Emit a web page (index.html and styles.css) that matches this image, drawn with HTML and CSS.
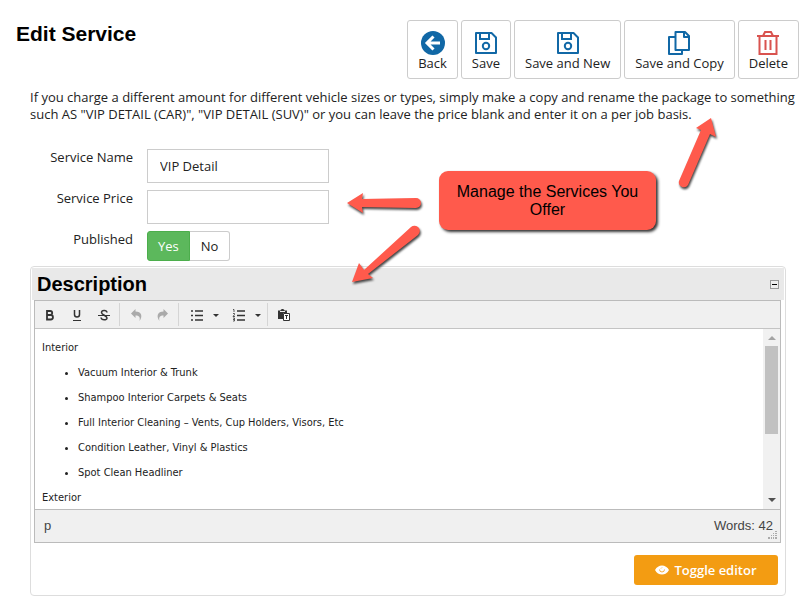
FILE: index.html
```
<!DOCTYPE html>
<html lang="en">
<head>
    <meta charset="UTF-8">
    <meta name="viewport" content="width=device-width, initial-scale=1.0">
    <title>Edit Service</title>
    <link rel="stylesheet" href="styles.css">
</head>
<body>
    <div class="page">
        <header class="page-header">
            <h1>Edit Service</h1>
            <div class="actions">
                <button type="button" class="action-btn">
                    <svg width="26" height="26" viewBox="0 0 26 26"><circle cx="13" cy="13" r="12" fill="#1168a6"/><path d="M20 13H8M13.500 6.500L7 13l6.500 6.500" fill="none" stroke="#fff" stroke-width="3"/></svg>
                    Back
                </button>
                <button type="button" class="action-btn">
                    <svg width="26" height="26" viewBox="0 0 26 26" fill="none" stroke="#1168a6" stroke-width="2"><path d="M3 3h15.500L23 7.500V23H3z" stroke-linejoin="round"/><path d="M7 3v6h9V3"/><circle cx="13" cy="16" r="3.200"/></svg>
                    Save
                </button>
                <button type="button" class="action-btn">
                    <svg width="26" height="26" viewBox="0 0 26 26" fill="none" stroke="#1168a6" stroke-width="2"><path d="M3 3h15.500L23 7.500V23H3z" stroke-linejoin="round"/><path d="M7 3v6h9V3"/><circle cx="13" cy="16" r="3.200"/></svg>
                    Save and New
                </button>
                <button type="button" class="action-btn">
                    <svg width="26" height="26" viewBox="0 0 26 26" fill="none" stroke="#1168a6" stroke-width="2" stroke-linejoin="round"><path d="M9 7H3v17h13v-4"/><path d="M9.500 2H19l4 4v14H9.500z"/><path d="M18 2v5h5"/></svg>
                    Save and Copy
                </button>
                <button type="button" class="action-btn">
                    <svg width="26" height="26" viewBox="0 0 26 26" fill="none" stroke="#d9534f" stroke-width="2"><path d="M2 6h22M8 6l2-4h6l2 4M4.500 6v18h17V6M10.500 10v10M15.500 10v10"/></svg>
                    Delete
                </button>
            </div>
        </header>

        <main class="content">
            <p class="intro">If you charge a different amount for different vehicle sizes or types, simply make a copy and rename the package to something such AS "VIP DETAIL (CAR)", "VIP DETAIL (SUV)" or you can leave the price blank and enter it on a per job basis.</p>

            <form class="service-form" autocomplete="off">
                <div class="form-row">
                    <label class="form-label" for="name">Service Name</label>
                    <input class="form-input" type="text" id="name" value="VIP Detail">
                </div>
                <div class="form-row">
                    <label class="form-label" for="price">Service Price</label>
                    <input class="form-input" type="text" id="price">
                </div>
                <div class="form-row">
                    <span class="form-label" id="published-label">Published</span>
                    <div class="switch" role="radiogroup" aria-labelledby="published-label">
                        <input type="radio" name="published" id="published-yes" checked>
                        <label for="published-yes">Yes</label>
                        <input type="radio" name="published" id="published-no">
                        <label for="published-no">No</label>
                    </div>
                </div>
            </form>

            <section class="panel">
                <div class="panel-header">
                    <h2>Description</h2>
                    <button type="button" class="collapse-btn" aria-label="Collapse"></button>
                </div>
                <div class="editor">
                    <div class="toolbar">
                        <div class="tool-group">
                            <button type="button" class="tool" aria-label="Bold"><svg width="14" height="14" viewBox="0 0 14 14" fill="none" stroke="#333" stroke-width="1.800"><path d="M4 3h3.200a1.900 1.900 0 0 1 0 4H4h3.700a2.200 2.200 0 0 1 0 4.500H4z"/></svg></button>
                            <button type="button" class="tool" aria-label="Underline"><svg width="14" height="14" viewBox="0 0 14 14" fill="none" stroke="#333"><path d="M4.500 2v4.500a2.500 2.500 0 0 0 5 0V2" stroke-width="1.500"/><path d="M3 12.500h8"/></svg></button>
                            <button type="button" class="tool" aria-label="Strikethrough"><svg width="14" height="14" viewBox="0 0 14 14" fill="none" stroke="#333"><path d="M10 4.500C9.500 1.500 4.500 2 4.500 4.500S10 7.500 10 10 4.500 12.500 4 9.500" stroke-width="1.500"/><path d="M1 7.500h12"/></svg></button>
                        </div>
                        <div class="tool-group">
                            <button type="button" class="tool" aria-label="Undo"><svg width="14" height="14" viewBox="0 0 14 14" fill="#aaa"><path d="M2 5.500L6.500 1v2.500c6 0 7.500 5 4 9.500 1-4-.5-5.500-4-5.500V10z"/></svg></button>
                            <button type="button" class="tool" aria-label="Redo"><svg width="14" height="14" viewBox="0 0 14 14" fill="#aaa"><path d="M12 5.500L7.500 1v2.500c-6 0-7.500 5-4 9.500-1-4 .5-5.500 4-5.500V10z"/></svg></button>
                        </div>
                        <div class="tool-group">
                            <button type="button" class="tool split" aria-label="Bullet list"><svg width="14" height="14" viewBox="0 0 14 14" fill="none" stroke="#333" stroke-width="1.400"><path d="M1 3h2M1 7.500h2M1 12h2M5 3h8M5 7.500h8M5 12h8"/></svg><span class="caret"></span></button>
                            <button type="button" class="tool split" aria-label="Numbered list"><svg width="14" height="14" viewBox="0 0 14 14" fill="none" stroke="#333"><path d="M5 3h8M5 7.500h8M5 12h8" stroke-width="1.400"/><path d="M1 1.500h1V4M1 5.500h1.500v1L1 8.500h2M1 10h1.500v1.500H1M2.500 11.500v1.500H1" stroke-width=".8"/></svg><span class="caret"></span></button>
                        </div>
                        <div class="tool-group">
                            <button type="button" class="tool" aria-label="Paste as text"><svg width="14" height="14" viewBox="0 0 14 14"><path d="M1 2.500h2.500C4 .5 7 .5 7.500 2.500H10V5H6v6H1z" fill="#333"/><path d="M3 3.500h5" stroke="#eee"/><path d="M6.500 5.500h6v7h-6z" fill="#fff" stroke="#333"/><path d="M8 7.500h3M9.500 7.500V11" stroke="#333"/></svg></button>
                        </div>
                    </div>
                    <div class="edit-area">
                        <div class="edit-body" contenteditable="true" role="textbox" aria-label="Description">
                            <p>Interior</p>
                            <ul>
                                <li>Vacuum Interior &amp; Trunk</li>
                                <li>Shampoo Interior Carpets &amp; Seats</li>
                                <li>Full Interior Cleaning – Vents, Cup Holders, Visors, Etc</li>
                                <li>Condition Leather, Vinyl &amp; Plastics</li>
                                <li>Spot Clean Headliner</li>
                            </ul>
                            <p>Exterior</p>
                        </div>
                        <div class="scrollbar" aria-hidden="true">
                            <span class="arrow-up"></span>
                            <span class="thumb"></span>
                            <span class="arrow-down"></span>
                        </div>
                    </div>
                    <div class="statusbar">
                        <span>p</span>
                        <span>Words: 42</span>
                        <svg class="grip" width="9" height="9" viewBox="0 0 9 9" fill="#aaa"><path d="M7 1h2v1H7zM5 3h1v1H5zM7 3h2v1H7zM3 5h1v1H3zM5 5h1v1H5zM7 5h2v1H7zM0 7h2v2H0zM3 7h1v2H3zM5 7h1v2H5zM7 7h2v2H7z"/></svg>
                    </div>
                </div>
                <button type="button" class="toggle-btn">
                    <svg width="14" height="10" viewBox="0 0 14 10"><path d="M0 5C3-1 11-1 14 5 11 11 3 11 0 5z" fill="#fff"/><path d="M4.500 4.500a2.500 2.500 0 0 0 5 0M6 3.500l1-1" fill="none" stroke="#f39c12" stroke-width=".8"/></svg>
                    Toggle editor
                </button>
            </section>
        </main>

        <!-- help notes laid over the form -->
        <div class="callout">Manage the Services You Offer</div>
        <svg class="arrow arrow-price" width="80" height="30" viewBox="0 0 80 30"><path d="M2 13L18 3l-1 6 54-1a5 5 0 0 1 0 10L17 17l1 6z"/></svg>
        <svg class="arrow arrow-description" width="80" height="70" viewBox="0 0 80 70"><path d="M2 62L9 43l5 7L61 7a5 5 0 0 1 7 8L18 54l5 4z"/></svg>
        <svg class="arrow arrow-copy" width="50" height="80" viewBox="0 0 50 80"><path d="M36 3L21 13l5 2L4 66a5 5 0 0 0 9 4L35 19l6 3z"/></svg>
    </div>
</body>
</html>
```
FILE: styles.css
```
* {
    box-sizing: border-box;
}
body {
    margin: 0;
    background: #fff;
    color: #222;
    font-family: "Open Sans", sans-serif;
    font-size: 13px;
    line-height: 17px;
}
button, input {
    font-family: inherit;
    font-size: 13px;
    color: #222;
}
h1, h2 {
    margin: 0;
    font-family: "Liberation Sans", Arial, sans-serif;
    font-weight: 700;
    color: #000;
}
.page {
    position: relative;
    padding: 20px 13px 20px 16px;
}
.page-header {
    display: flex;
    justify-content: space-between;
    align-items: flex-start;
}
h1 {
    font-size: 21px;
    line-height: 28px;
}
.actions {
    display: flex;
    gap: 3px;
}
.action-btn {
    display: flex;
    flex-direction: column;
    align-items: center;
    height: 59px;
    padding: 9px 10px 0;
    border: 1px solid #ccc;
    border-radius: 3px;
    background: #fff;
    line-height: 14px;
    cursor: pointer;
}
.content {
    padding: 10px 13px 0 14px;
}
.intro {
    margin: 0 -13px 25px 0;
}

/* form */
.service-form {
    display: flex;
    flex-direction: column;
    gap: 7px;
    margin-bottom: 5px;
    padding-top: 1px;
}
.form-row {
    display: flex;
    gap: 14px;
}
.form-label {
    width: 103px;
    text-align: right;
}
.form-input {
    width: 182px;
    height: 34px;
    padding: 0 12px;
    border: 1px solid #ccc;
    background: #fff;
}
.switch {
    display: flex;
    height: 30px;
}
.switch input {
    appearance: none;
    width: 0;
    height: 0;
    margin: 0;
}
.switch label {
    padding: 6px 11px;
    border: 1px solid #ccc;
    border-left: none;
    border-radius: 0 3px 3px 0;
    cursor: pointer;
}
.switch label:first-of-type {
    padding: 6px 10px;
    border: 1px solid #ccc;
    border-radius: 3px 0 0 3px;
}
.switch input:checked + label {
    background: #5cb85c;
    border-color: #4cae4c;
    color: #fff;
}

/* description */
.panel {
    padding: 1px 1px 10px;
    border: 1px solid #ddd;
    border-radius: 4px;
}
.panel-header {
    display: flex;
    justify-content: space-between;
    align-items: center;
    padding: 0 5px;
    background: #e9e9e9;
}
h2 {
    font-size: 20px;
    line-height: 32px;
}
.collapse-btn {
    display: flex;
    align-items: center;
    justify-content: center;
    width: 9px;
    height: 9px;
    padding: 0;
    border: 1px solid #999;
    background: #eee;
}
.collapse-btn::before {
    content: "";
    width: 5px;
    height: 1px;
    background: #000;
}
.editor {
    margin: 0 3px 12px 2px;
    border: 1px solid #bbb;
}
.toolbar {
    display: flex;
    align-items: center;
    height: 28px;
    background: #f0f0f0;
    border-bottom: 1px solid #c4c4c4;
}
.tool-group {
    display: flex;
    padding: 1px 2px 0;
    border-left: 1px solid #d5d5d5;
}
.tool-group:first-child {
    padding-left: 1px;
    border-left: none;
}
.tool {
    display: flex;
    align-items: center;
    justify-content: center;
    width: 27px;
    height: 22px;
    padding: 0;
    border: none;
    background: transparent;
}
.split {
    justify-content: flex-end;
    width: 42px;
    padding-right: 4px;
    gap: 9px;
}
.caret {
    border: 3px solid transparent;
    border-top-color: #333;
    border-bottom: none;
}
.edit-area {
    display: flex;
    height: 180px;
}
.edit-body {
    flex: 1;
    overflow: hidden;
    padding: 10px 7px;
    font-family: "DejaVu Sans Condensed", Tahoma, sans-serif;
    font-size: 11px;
}
.edit-body p, .edit-body li {
    margin: 0 0 8px;
}
.edit-body ul {
    margin: 0;
    padding-left: 36px;
}
.scrollbar {
    display: flex;
    flex-direction: column;
    align-items: center;
    width: 17px;
    padding: 7px 0;
    background: #f1f1f1;
}
.arrow-up {
    border: 4px solid transparent;
    border-bottom-color: #a3a3a3;
    border-top: none;
}
.thumb {
    width: 13px;
    height: 88px;
    margin: 6px 0 auto;
    background: #c1c1c1;
}
.arrow-down {
    border: 4px solid transparent;
    border-top-color: #505050;
    border-bottom: none;
}
.statusbar {
    position: relative;
    display: flex;
    justify-content: space-between;
    padding: 7px 7px 8px 9px;
    border-top: 1px solid #bbb;
    background: #f0f0f0;
    font-family: "Liberation Sans", Arial, sans-serif;
    font-size: 13px;
    color: #444;
}
.grip {
    position: absolute;
    right: 3px;
    bottom: 3px;
}
.toggle-btn {
    display: flex;
    align-items: center;
    justify-content: center;
    gap: 5px;
    width: 144px;
    height: 30px;
    margin: 0 6px 0 auto;
    border: none;
    border-radius: 3px;
    background: #f39c12;
    color: #fff;
    font-weight: 600;
    cursor: pointer;
}

/* notes */
.callout {
    position: absolute;
    top: 171px;
    left: 439px;
    width: 217px;
    padding: 12px 16px 11px;
    border-radius: 9px;
    background: #ff5a4c;
    box-shadow: 2px 2px 3px #333;
    color: #000;
    font-family: "Liberation Sans", Arial, sans-serif;
    font-size: 16px;
    line-height: 18px;
    text-align: center;
}
.arrow {
    position: absolute;
    fill: #ff5a4c;
    filter: drop-shadow(1px 2px 1px #444);
}
.arrow-price {
    top: 190px;
    left: 345px;
}
.arrow-description {
    top: 220px;
    left: 350px;
}
.arrow-copy {
    top: 115px;
    left: 675px;
}
```
